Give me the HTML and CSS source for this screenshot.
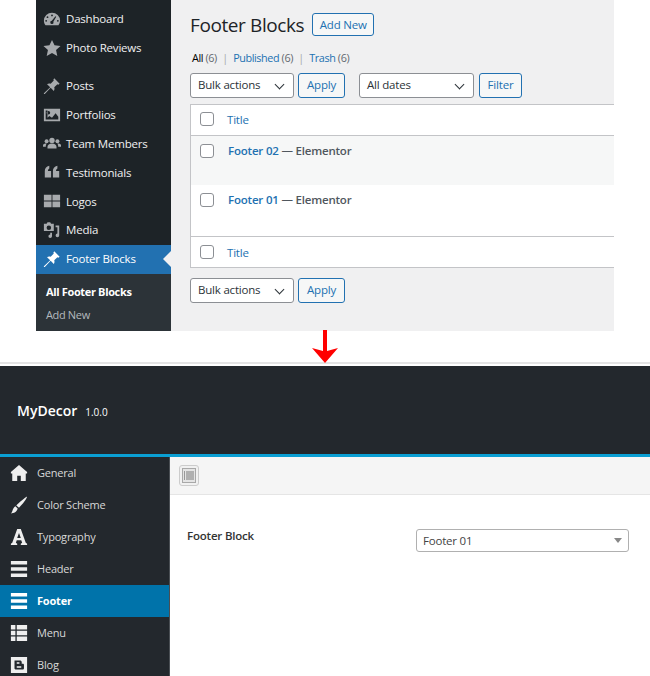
FILE: index.html
```html
<!DOCTYPE html>
<html lang="en">
<head>
    <meta charset="UTF-8">
    <title>Footer Blocks</title>
    <link rel="stylesheet" href="styles.css">
</head>
<body>
    <div class="wp">
        <ul class="wp-menu">
            <li class="group-gap">
                <svg viewBox="0 0 20 20"><path d="M10 3a9 9 0 0 0-9 9c0 2 .7 3.600 1.800 5h14.400A8.700 8.700 0 0 0 19 12a9 9 0 0 0-9-9zm0 2a1 1 0 1 1 0 2 1 1 0 0 1 0-2zM5 7a1 1 0 1 1 0 2 1 1 0 0 1 0-2zm8.800 0 .9.500-3.200 5.500a1.800 1.800 0 1 1-1.700-1zM3.500 11a1 1 0 1 1 0 2 1 1 0 0 1 0-2zm13 0a1 1 0 1 1 0 2 1 1 0 0 1 0-2z"/></svg>
                Dashboard
            </li>
            <li class="last-of-group">
                <svg viewBox="0 0 20 20"><path d="M10 1l2.800 6 6.700.8-5 4.500 1.400 6.700-5.900-3.400L4.100 19l1.400-6.700-5-4.500 6.700-.8z"/></svg>
                Photo Reviews
            </li>
            <li>
                <svg viewBox="0 0 20 20"><path d="M12.500 1.500l6 6-1.500 1-1-.5-3.500 3.500c.5 1.500.3 3-.5 4L8.500 12 2 19l-1 0 0-1 7-6.500L4.500 8c1-.8 2.500-1 4-.5L12 4l-.5-1z"/></svg>
                Posts
            </li>
            <li>
                <svg viewBox="0 0 20 20"><path fill-rule="evenodd" d="M1 3h18v14H1zm2 2v10h14v-3l-3-4-4 5-3-2-2 2V5zm3 .5a2 2 0 1 0 0 4 2 2 0 0 0 0-4z"/></svg>
                Portfolios
            </li>
            <li>
                <svg viewBox="0 0 20 20"><circle cx="10" cy="6" r="3"/><circle cx="4" cy="7" r="2.200"/><circle cx="16" cy="7" r="2.200"/><path d="M5 15v-2c0-2 2-3.500 5-3.500s5 1.500 5 3.500v2zM0 13v-1.500C0 10 1.500 9.500 4 9.500c-.5 1-1 2-.9 3.500zm20 0v-1.500c0-1.500-1.500-2-4-2 .5 1 1 2 .9 3.500z"/></svg>
                Team Members
            </li>
            <li>
                <svg viewBox="0 0 20 20"><path d="M2 16V9c0-3 1.500-5 5-6v3C6 6.500 5.500 7.500 5.500 9H9v7zm9 0V9c0-3 1.500-5 5-6v3c-1 .5-1.500 1.500-1.500 3H18v7z"/></svg>
                Testimonials
            </li>
            <li>
                <svg viewBox="0 0 20 20"><path d="M1 3h8.500v6.500H1zm9.500 0H19v6.500h-8.500zM1 10.500h8.500V17H1zm9.500 0H19V17h-8.500z"/></svg>
                Logos
            </li>
            <li>
                <svg viewBox="0 0 20 20"><path fill-rule="evenodd" d="M1 3h3l1-1.500h3L9 3h3v8H1zm5.500 2a2.500 2.500 0 1 0 0 5 2.500 2.500 0 0 0 0-5z"/><path d="M18 5v11a2 2 0 1 1-2-2V7h-2V5zM10 13v4a2 2 0 1 1-2-2v-2z"/></svg>
                Media
            </li>
            <li class="current">
                <svg viewBox="0 0 20 20"><path d="M12.500 1.500l6 6-1.500 1-1-.5-3.500 3.500c.5 1.500.3 3-.5 4L8.500 12 2 19l-1 0 0-1 7-6.500L4.500 8c1-.8 2.500-1 4-.5L12 4l-.5-1z"/></svg>
                Footer Blocks
            </li>
            <li class="sub">
                <a class="sub-on">All Footer Blocks</a>
                <a>Add New</a>
            </li>
        </ul>
        <div class="wp-main">
            <div class="title-row">
                <h1>Footer Blocks</h1>
                <span class="btn add-new">Add New</span>
            </div>
            <p class="views"><b>All</b> <i>(6)</i> <i class="sep">|</i> <a>Published</a> <i>(6)</i> <i class="sep">|</i> <a>Trash</a> <i>(6)</i></p>
            <div class="actions">
                <span class="select bulk">Bulk actions</span>
                <span class="btn apply">Apply</span>
                <span class="select dates">All dates</span>
                <span class="btn filter">Filter</span>
            </div>
            <div class="table">
                <div class="row head"><span class="check"></span><a>Title</a></div>
                <div class="row post alt"><span class="check"></span><span class="post-title"><a>Footer 02</a> — Elementor</span></div>
                <div class="row post"><span class="check"></span><span class="post-title"><a>Footer 01</a> — Elementor</span></div>
                <div class="row foot"><span class="check"></span><a>Title</a></div>
            </div>
            <div class="actions bottom">
                <span class="select bulk">Bulk actions</span>
                <span class="btn apply">Apply</span>
            </div>
        </div>
    </div>

    <div class="arrow-gap">
        <svg width="26" height="33" viewBox="0 0 26 33"><path d="M11 0h4v21l11-3-13 15L0 18l11 3z" fill="#f00"/></svg>
    </div>

    <div class="panel-head">
        <b>MyDecor</b><span>1.0.0</span>
    </div>
    <div class="panel">
        <ul class="panel-menu">
            <li>
                <svg viewBox="0 0 20 20"><path d="M10 1l9 8v1.500h-1.500V19H12v-6H8v6H2.500v-8.500H1V9z"/></svg>
                General
            </li>
            <li>
                <svg viewBox="0 0 20 20"><path d="M19 .5c.3 1.500-5 9-9 12.500l-3-2.500C10 7 17 1.500 19 .5zM6 11.500l2.500 2.500C8 17.500 4 19.500 1 19.500c2-1.500 1.500-6 5-8z"/></svg>
                Color Scheme
            </li>
            <li>
                <svg viewBox="0 0 20 20"><path fill-rule="evenodd" d="M8 1h4l5.500 15.500 1.500 1V19h-7v-1.500l1.500-1-1-3H7.500l-1 3 1.500 1V19H1v-1.500l1.500-1zM10 5.500 8 11h4z"/></svg>
                Typography
            </li>
            <li>
                <svg viewBox="0 0 20 20"><path d="M1 1h18v4H1zm0 7h18v4H1zm0 7h18v4H1z"/></svg>
                Header
            </li>
            <li class="current">
                <svg viewBox="0 0 20 20"><path d="M1 1h18v4H1zm0 7h18v4H1zm0 7h18v4H1z"/></svg>
                Footer
            </li>
            <li>
                <svg viewBox="0 0 20 20"><path d="M1 1h5v5H1zm6.500 0H19v5H7.500zM1 7.500h5v5H1zm6.500 0H19v5H7.500zM1 14h5v5H1zm6.500 0H19v5H7.500z"/></svg>
                Menu
            </li>
            <li>
                <svg viewBox="0 0 20 20"><path fill-rule="evenodd" d="M1 1h18v18H1zm4 4v9c0 .5.500 1 1 1h8c1 0 1.500-.5 1.500-1.500V10c0-1-.5-1.500-1.500-1.500h-1V6.500C12.500 5.500 12 5 11 5zm2.500 2h3v1.500h-3zm0 4.500h5V13h-5z"/></svg>
                Blog
            </li>
        </ul>
        <div class="panel-main">
            <div class="toolbar">
                <span class="layout-btn">
                    <svg width="14" height="15" viewBox="0 0 14 15"><rect x=".5" y=".5" width="13" height="14" fill="#e4e4e4" stroke="#a8a8a8"/><rect x="4" y="3" width="8" height="9" fill="#b0b0b0"/><rect x="2" y="3" width="1" height="9" fill="#999"/></svg>
                </span>
            </div>
            <div class="option">
                <label>Footer Block</label>
                <span class="panel-select">Footer 01</span>
            </div>
        </div>
    </div>
</body>
</html>
```

FILE: styles.css
```css
*{margin:0;padding:0;box-sizing:border-box;}
html,body{height:676px;overflow:hidden;}
body{
    background:#fff;
    font-family:"Open Sans","Noto Sans",sans-serif;
    font-size:11.5px;
    letter-spacing:-.2px;
    color:#3c434a;
}
ul{list-style:none;}
i{font-style:normal;}
svg{fill:currentColor;flex:none;}

/* wordpress screenshot */
.wp{
    display:flex;
    width:578px;
    height:331px;
    margin-left:36px;
}
.wp-menu{
    width:135px;
    padding-top:5px;
    background:#1d2327;
    color:#f0f0f1;
}
.wp-menu li{
    display:flex;
    align-items:center;
    gap:5px;
    height:28.8px;
    padding:0 0 1px 7px;
}
.wp-menu svg{width:18px;height:18px;color:#a7aaad;}
.wp-menu li.last-of-group{margin-bottom:9.500px;}
.wp-menu li.current{
    position:relative;
    background:#2271b1;
    color:#fff;
}
.wp-menu li.current svg{color:#fff;}
.wp-menu li.current:after{
    content:"";
    position:absolute;
    right:0;
    top:50%;
    margin-top:-8px;
    border:8px solid transparent;
    border-right-color:#f0f0f1;
}
.wp-menu li.sub{
    display:block;
    height:57px;
    padding:6px 0 0 10px;
    background:#2c3338;
    font-size:11px;
    letter-spacing:-.35px;
    color:#b4b9be;
}
.wp-menu .sub a{display:block;height:23px;line-height:23px;}
.wp-menu .sub a.sub-on{color:#fff;font-weight:700;}

.wp-main{
    flex:1;
    padding:13px 0 0 19px;
    background:#f0f0f1;
}
.title-row{display:flex;align-items:center;gap:8px;height:23px;}
h1{font-size:19px;font-weight:400;letter-spacing:-.4px;color:#1d2327;}
.btn{
    display:flex;
    align-items:center;
    justify-content:center;
    padding-bottom:2px;
    border:1px solid #2271b1;
    border-radius:3px;
    background:#f6f7f7;
    color:#2271b1;
}
.add-new{width:62px;height:23px;padding-bottom:1px;}
.views{
    margin-top:14px;
    padding-left:2px;
    height:16px;
    line-height:16px;
    font-size:10.800px;
    letter-spacing:-.4px;
    color:#646970;
}
.views b{font-weight:400;color:#000;}
.views a,.table a{color:#2271b1;}
.views .sep{margin:0 3px;color:#a7aaad;}
.actions{display:flex;margin-top:7px;height:25px;}
.actions .apply{width:47px;margin-left:4px;}
.select{
    position:relative;
    display:flex;
    align-items:center;
    padding:0 0 2px 7px;
    border:1px solid #8c8f94;
    border-radius:3px;
    background:#fff;
    color:#2c3338;
}
.select:after{
    content:"";
    position:absolute;
    right:10px;
    top:7px;
    width:6px;
    height:6px;
    border:solid #2c3338;
    border-width:0 1.500px 1.500px 0;
    transform:rotate(45deg);
}
.bulk{width:104px;}
.dates{width:115px;margin-left:14px;}
.filter{width:43px;margin-left:5px;}
.table{
    margin-top:6px;
    border:1px solid #c3c4c7;
    border-right:0;
    background:#fff;
}
.row{display:flex;gap:13px;padding-left:9px;}
.head{align-items:center;height:31px;padding-bottom:2px;border-bottom:1px solid #c3c4c7;}
.foot{align-items:center;height:31px;border-top:1px solid #c3c4c7;}
.post{height:51px;padding-top:7px;}
.post.alt{background:#f6f7f7;height:49px;}
.check{
    width:14px;
    height:14px;
    border:1px solid #8c8f94;
    border-radius:3px;
    background:#fff;
}
.post .check{margin-top:1px;}
.post-title{margin-left:1px;font-weight:600;color:#50575e;}
.actions.bottom{margin-top:10px;}

/* arrow between the two shots */
.arrow-gap{
    display:flex;
    justify-content:center;
    height:33px;
    border-bottom:2px solid #e4e4e4;
}
.arrow-gap svg{margin-top:-1px;}

/* theme options screenshot */
.panel-head{
    display:flex;
    align-items:center;
    gap:8px;
    height:91px;
    margin-top:2px;
    padding:1px 0 0 17px;
    border-bottom:3px solid #0a9fd3;
    background:#23282d;
    color:#fff;
    font-size:10px;
    letter-spacing:0;
}
.panel-head b{font-size:14px;font-weight:600;}
.panel-head span{margin-top:2px;}
.panel{display:flex;height:219px;}
.panel-menu{
    width:170px;
    border-right:1px solid #4a4f54;
    background:#23282d;
    font-size:11px;
    color:#d8d8d8;
}
.panel-menu li{
    display:flex;
    align-items:center;
    gap:9px;
    height:32px;
    padding:0 0 1px 10px;
}
.panel-menu svg{width:18px;height:18px;color:#eee;}
.panel-menu .current{background:#0073aa;color:#fff;font-weight:700;}
.panel-menu .current svg{color:#fff;}
.panel-main{flex:1;}
.toolbar{
    display:flex;
    align-items:center;
    height:38px;
    padding-left:9px;
    background:#f5f5f5;
    border-bottom:1px solid #e5e5e5;
}
.layout-btn{
    display:flex;
    align-items:center;
    justify-content:center;
    width:20px;
    height:21px;
    border:1px solid #ccc;
    border-radius:3px;
    background:#f1f1f1;
}
.option{
    display:flex;
    align-items:center;
    justify-content:space-between;
    padding:33px 21px 0 17px;
}
.option label{margin-bottom:9px;font-weight:600;color:#333;}
.panel-select{
    position:relative;
    width:213px;
    height:23px;
    padding-left:6px;
    line-height:22px;
    border:1px solid #b0b0b0;
    border-radius:3px;
    color:#444;
}
.panel-select:after{
    content:"";
    position:absolute;
    right:6px;
    top:8px;
    border:4px solid transparent;
    border-top:5px solid #888;
}
```
